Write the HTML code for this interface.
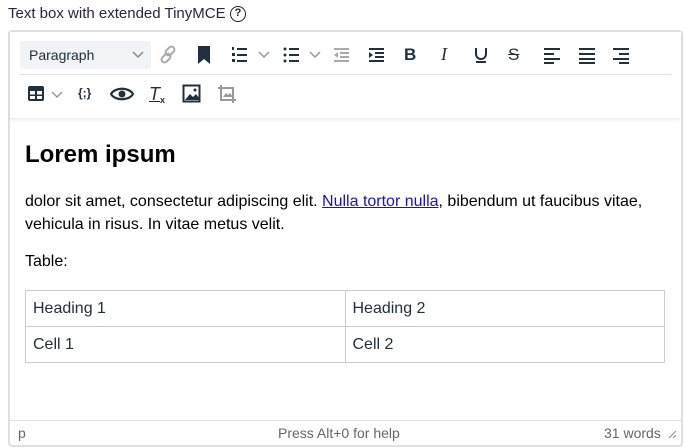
<!DOCTYPE html>
<html><head><meta charset="utf-8"><style>
*{margin:0;padding:0;box-sizing:border-box}
body{width:684px;height:448px;background:#fff;font-family:"Liberation Sans",sans-serif;position:relative;overflow:hidden;color:#222f3e}
.a{position:absolute}
.lbl{left:8px;top:5px;font-size:15px;color:#2b2340}
.q{left:230px;top:6px;width:16px;height:16px;border:1.5px solid #222;border-radius:50%;font-size:11px;text-align:center;line-height:13px;font-weight:bold;color:#222}
.box{left:8px;top:30px;width:675px;height:417px;border:2px solid #e0e0e0;border-radius:4px}
.tb{left:10px;top:32px;width:671px;height:86px;background:#fff;box-shadow:0 2px 3px rgba(0,0,0,.08)}
.div{left:20px;top:74px;width:651px;height:1px;background:#e3e3e3}
.sel{left:20px;top:41px;width:131px;height:28px;background:#f1f3f5;border-radius:3px;font-size:14px;line-height:28px;padding-left:9px;color:#222f3e}
svg{position:absolute}
.c{left:25px;font-size:16px;color:#000}
h1{position:absolute;left:25px;top:141px;font-size:24px;font-weight:bold;color:#000}
a{color:#1a0dd8;text-decoration:underline}
table{position:absolute;left:25px;top:290px;width:640px;border-collapse:collapse;font-size:16px}
td{border:1px solid #ccc;height:36px;padding-left:7px;width:320px}
.sb{left:10px;top:420px;width:671px;height:1px;background:#e3e3e3}
.st{top:425px;font-size:14px;color:#666}
</style></head><body>
<div class="a lbl">Text box with extended TinyMCE</div>
<div class="a q">?</div>
<div class="a box"></div>
<div class="a tb"></div>
<div class="a div"></div>
<div class="a sel">Paragraph</div>
<svg style="left:132px;top:50px" width="12" height="10"><path d="M1 2l5 5 5-5" stroke="#888" stroke-width="1.5" fill="none"/></svg>
<svg style="left:159px;top:45px" width="20" height="20"><g stroke="#aaa" stroke-width="2" fill="none"><rect x="8" y="1" width="6" height="10" rx="3" transform="rotate(45 11 6)"/><rect x="4" y="8" width="6" height="10" rx="3" transform="rotate(45 7 13)"/></g></svg>
<svg style="left:196px;top:45px" width="16" height="20"><path d="M2 1h12v18l-6-5-6 5z" fill="#222f3e"/></svg>
<svg style="left:230px;top:45px" width="20" height="20"><g fill="#222f3e"><rect x="7" y="3" width="10" height="2"/><rect x="7" y="9" width="10" height="2"/><rect x="7" y="15" width="10" height="2"/><rect x="2" y="2" width="2" height="3"/><rect x="2" y="8" width="3" height="3"/><rect x="2" y="14" width="3" height="3"/></g></svg>
<svg style="left:258px;top:50px" width="12" height="10"><path d="M1 2l5 5 5-5" stroke="#999" stroke-width="1.5" fill="none"/></svg>
<svg style="left:282px;top:45px" width="20" height="20"><g fill="#222f3e"><rect x="7" y="3" width="10" height="2"/><rect x="7" y="9" width="10" height="2"/><rect x="7" y="15" width="10" height="2"/><circle cx="3" cy="4" r="1.5"/><circle cx="3" cy="10" r="1.5"/><circle cx="3" cy="16" r="1.5"/></g></svg>
<svg style="left:309px;top:50px" width="12" height="10"><path d="M1 2l5 5 5-5" stroke="#999" stroke-width="1.5" fill="none"/></svg>
<svg style="left:332px;top:45px" width="20" height="20"><g fill="#aaa"><rect x="2" y="3" width="15" height="2"/><rect x="8" y="7" width="9" height="2"/><rect x="8" y="11" width="9" height="2"/><rect x="2" y="15" width="15" height="2"/><path d="M6 7v6l-4-3z"/></g></svg>
<svg style="left:367px;top:45px" width="20" height="20"><g fill="#222f3e"><rect x="2" y="3" width="15" height="2"/><rect x="8" y="7" width="9" height="2"/><rect x="8" y="11" width="9" height="2"/><rect x="2" y="15" width="15" height="2"/><path d="M2 7v6l4-3z"/></g></svg>
<div class="a" style="left:404px;top:45px;font-size:17px;font-weight:bold;color:#222f3e">B</div>
<div class="a" style="left:441px;top:44px;font-size:18px;font-style:italic;font-family:'Liberation Serif',serif;color:#222f3e">I</div>
<svg style="left:473px;top:45px" width="16" height="20"><path d="M3 3v6a5 5 0 0010 0V3" stroke="#222f3e" stroke-width="2" fill="none"/><rect x="3" y="16" width="10" height="2" fill="#222f3e"/></svg>
<div class="a" style="left:508px;top:45px;font-size:17px;color:#222f3e;text-decoration:line-through">S</div>
<svg style="left:543px;top:45px" width="20" height="20"><g fill="#222f3e"><rect x="1" y="3" width="16" height="2"/><rect x="1" y="8" width="10" height="2"/><rect x="1" y="13" width="16" height="2"/><rect x="1" y="17" width="10" height="2"/></g></svg>
<svg style="left:578px;top:45px" width="20" height="20"><g fill="#222f3e"><rect x="1" y="3" width="16" height="2"/><rect x="1" y="8" width="16" height="2"/><rect x="1" y="13" width="16" height="2"/><rect x="1" y="17" width="16" height="2"/></g></svg>
<svg style="left:612px;top:45px" width="20" height="20"><g fill="#222f3e"><rect x="1" y="3" width="16" height="2"/><rect x="7" y="8" width="10" height="2"/><rect x="1" y="13" width="16" height="2"/><rect x="7" y="17" width="10" height="2"/></g></svg>
<svg style="left:27px;top:85px" width="20" height="18"><rect x="1" y="1" width="16" height="15" rx="2" fill="#222f3e"/><g fill="#fff"><rect x="3" y="6" width="5" height="3.5"/><rect x="10" y="6" width="5" height="3.5"/><rect x="3" y="11" width="5" height="3"/><rect x="10" y="11" width="5" height="3"/></g></svg>
<svg style="left:51px;top:90px" width="12" height="10"><path d="M1 2l5 5 5-5" stroke="#999" stroke-width="1.5" fill="none"/></svg>
<div class="a" style="left:78px;top:86px;font-size:12px;font-weight:bold;color:#222f3e">{;}</div>
<svg style="left:110px;top:85px" width="24" height="18"><path d="M1 9C5 2 19 2 23 9 19 16 5 16 1 9z" stroke="#222f3e" stroke-width="2.2" fill="none"/><circle cx="12" cy="9" r="3.5" fill="#222f3e"/></svg>
<div class="a" style="left:149px;top:84px;font-size:18px;font-style:italic;color:#222f3e;text-decoration:underline">T</div>
<div class="a" style="left:160px;top:95px;font-size:9px;font-weight:bold;color:#222f3e">x</div>
<svg style="left:182px;top:84px" width="20" height="20"><rect x="1.5" y="1.5" width="16" height="16" stroke="#222f3e" stroke-width="2" fill="none"/><path d="M3 16l5-6 3 3 3-3 3 4v2H3z" fill="#222f3e"/><circle cx="13" cy="6" r="1.5" fill="#222f3e"/></svg>
<svg style="left:217px;top:84px" width="20" height="20"><g stroke="#999" stroke-width="2" fill="none"><path d="M4 1v15h15"/><path d="M1 4h15v15"/></g><path d="M6 13l3-4 2 2 2-2 3 4z" fill="#999"/></svg>
<h1>Lorem ipsum</h1>
<div class="a c" style="top:190px;line-height:23px">dolor sit amet, consectetur adipiscing elit. <a>Nulla tortor nulla</a>, bibendum ut faucibus vitae,<br>vehicula in risus. In vitae metus velit.</div>
<div class="a c" style="top:253px">Table:</div>
<table><tr><td>Heading 1</td><td>Heading 2</td></tr><tr><td>Cell 1</td><td>Cell 2</td></tr></table>
<div class="a sb"></div>
<div class="a st" style="left:18px">p</div>
<div class="a st" style="left:278px">Press Alt+0 for help</div>
<div class="a st" style="left:604px">31 words</div>
<svg style="left:667px;top:429px" width="10" height="10"><path d="M9 2L2 9M9 6L6 9" stroke="#999" stroke-width="1.2"/></svg>
</body></html>
